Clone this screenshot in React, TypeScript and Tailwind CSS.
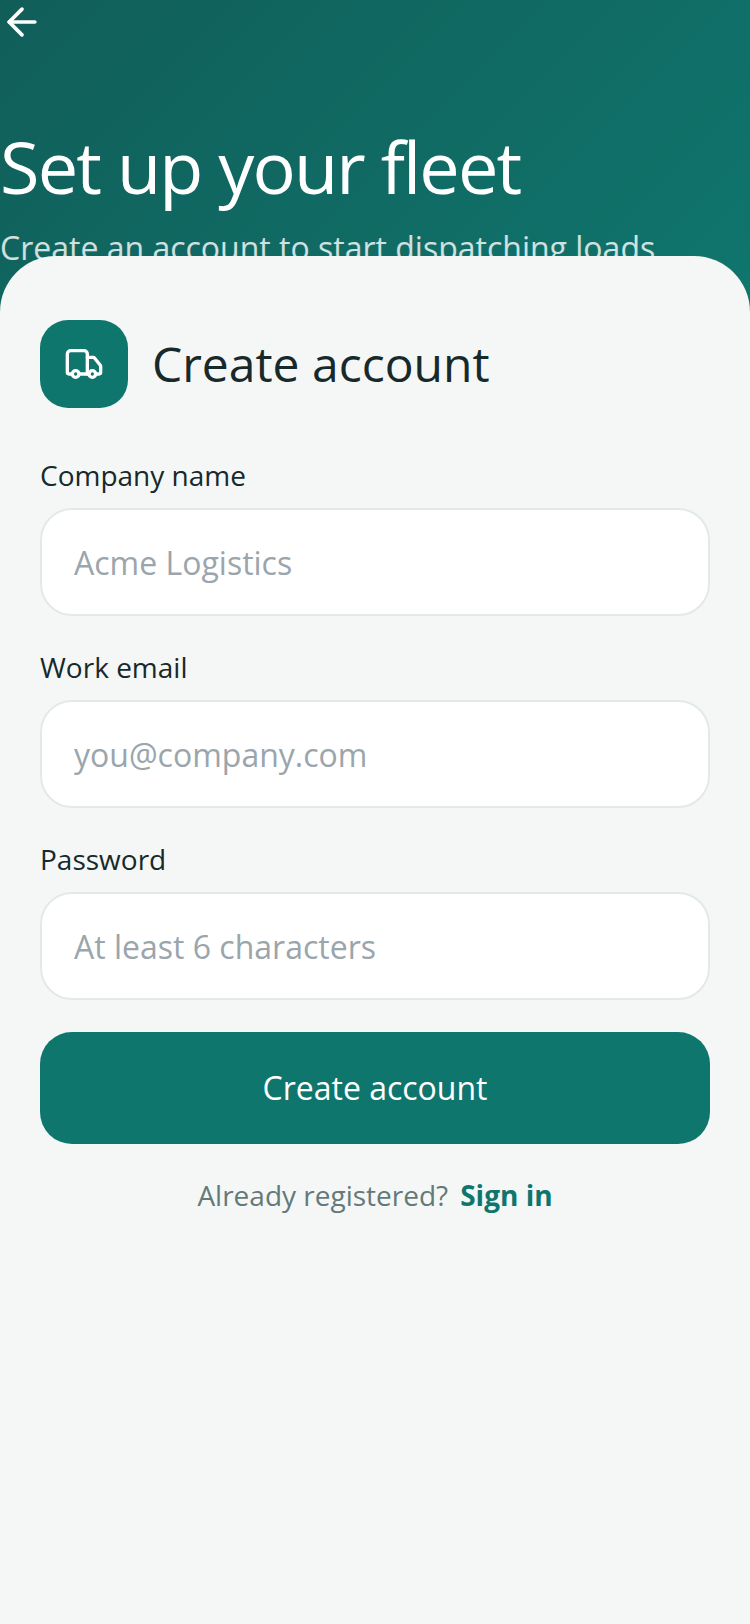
import { ArrowLeft, Truck } from "lucide-react";

const campos = [
  { label: "Company name", placeholder: "Acme Logistics", type: "text" },
  { label: "Work email", placeholder: "you@company.com", type: "email" },
  { label: "Password", placeholder: "At least 6 characters", type: "password" },
];

export default function App() {
  return (
    <main className="min-h-[1624px] w-[750px] flex flex-col overflow-hidden bg-[#f5f7f7] font-['Open_Sans',sans-serif]">
      {/* Encabezado */}
      <header className="h-[340px] bg-[linear-gradient(135deg,#115e59,#0f766e)] text-white">
        <ArrowLeft className="w-[44px] h-[44px]" strokeWidth={2} />
        <h1 className="mt-[78px] text-[72px] leading-[88px] font-normal tracking-[-1.85px]">Set up your fleet</h1>
        <p className="mt-[16px] text-[32px] leading-[44px] text-white/80">Create an account to start dispatching loads</p>
      </header>

      {/* Formulario */}
      <section className="relative -mt-[84px] flex-1 rounded-t-[56px] bg-[#f5f7f7] px-[40px] pt-[64px]">
        <div className="flex items-center gap-[24px]">
          <div className="w-[88px] h-[88px] rounded-[28px] bg-[#0f766e] flex items-center justify-center">
            <Truck className="w-[40px] h-[40px] text-white" strokeWidth={2} />
          </div>
          <h2 className="text-[48px] leading-[64px] font-normal text-[#17292a]">Create account</h2>
        </div>

        <div className="mt-[48px] flex flex-col gap-[32px]">
          {campos.map(({ label, placeholder, type }) => (
            <label key={label} className="flex flex-col gap-[14px]">
              <span className="text-[28px] leading-[38px] text-[#17292a]">{label}</span>
              <input
                type={type}
                placeholder={placeholder}
                className="h-[108px] rounded-[32px] border-2 border-[#e3e8ea] bg-white px-[32px] text-[32px] outline-none placeholder:text-[#9aa5ac]"
              />
            </label>
          ))}
        </div>

        <button className="mt-[32px] w-full h-[112px] rounded-[32px] bg-[#0f766e] text-[32px] text-white">
          Create account
        </button>

        <p className="mt-[29px] flex justify-center gap-[12px] text-[28px] leading-[44px] text-[#64797a]">
          Already registered?
          <span className="font-bold text-[#0f766e]">Sign in</span>
        </p>
      </section>
    </main>
  );
}
